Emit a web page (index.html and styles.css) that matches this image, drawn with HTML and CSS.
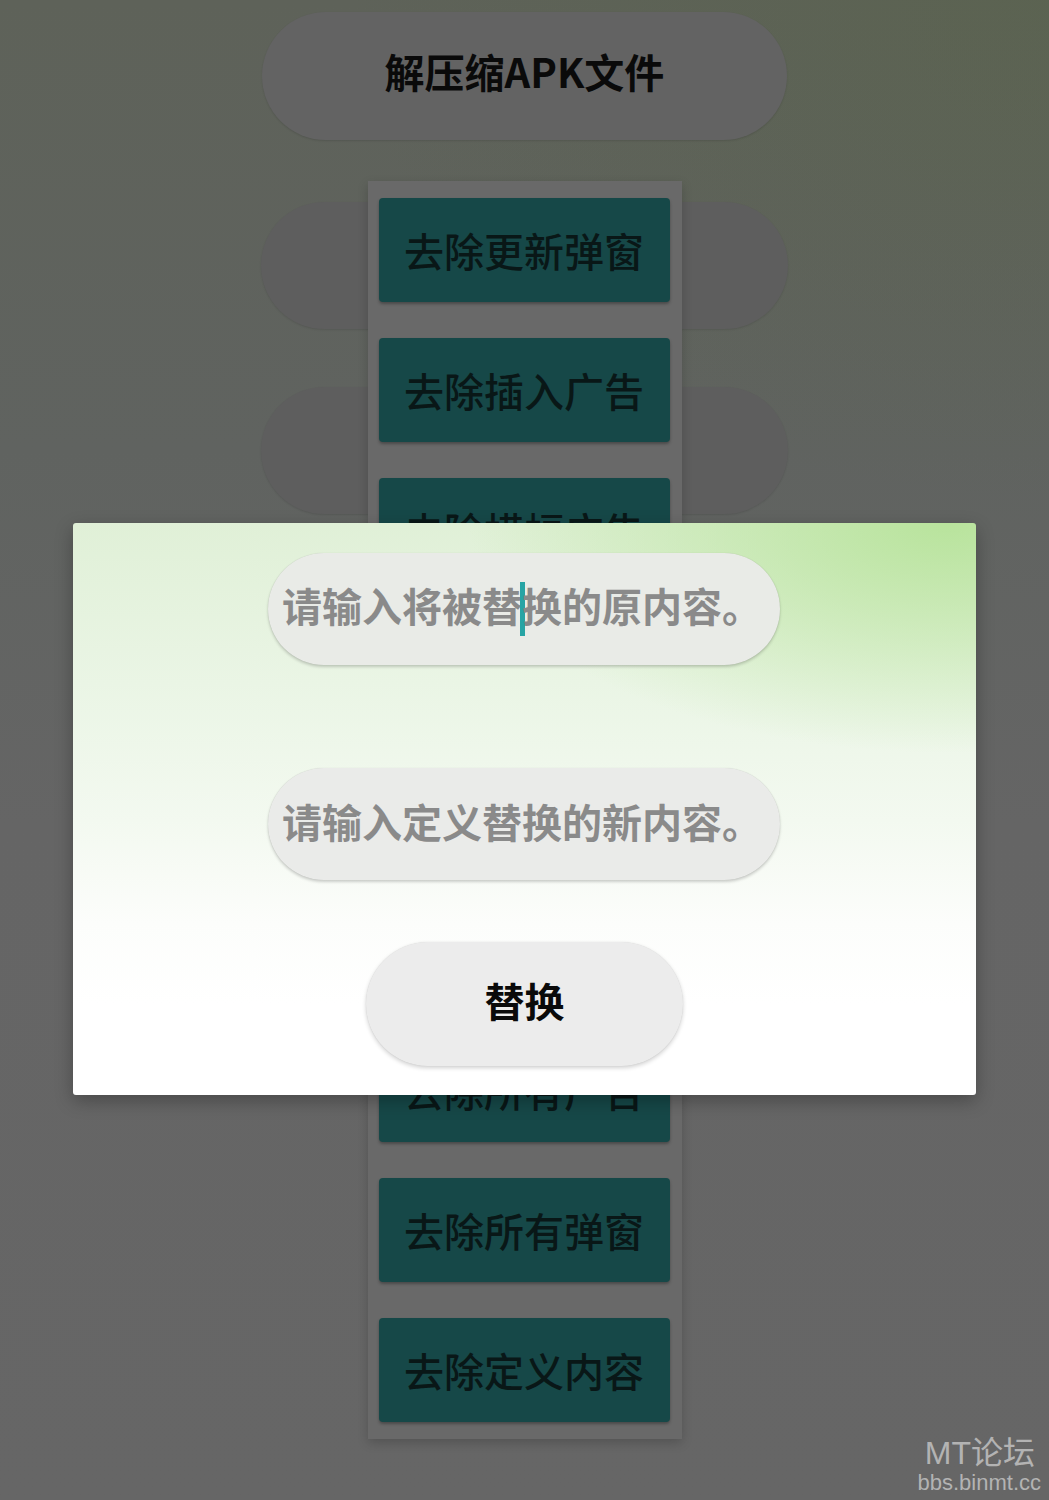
FILE: index.html
```html
<!DOCTYPE html>
<html lang="zh-CN">
<head>
<meta charset="utf-8">
<title>解压缩APK文件</title>
<link rel="stylesheet" href="styles.css">
</head>
<body>
<div class="screen">
  <div class="app">
    <div class="head-pill">解压缩APK文件</div>
    <div class="stack">
      <div class="ghosts">
        <div class="ghost-pill"></div>
        <div class="ghost-pill"></div>
      </div>
      <div class="panel">
        <div class="tool-btn">去除更新弹窗</div>
        <div class="tool-btn">去除插入广告</div>
        <div class="tool-btn">去除横幅广告</div>
        <div class="tool-btn covered">去除启动广告</div>
        <div class="tool-btn covered">去除悬浮广告</div>
        <div class="tool-btn covered">去除视频广告</div>
        <div class="tool-btn">去除所有广告</div>
        <div class="tool-btn">去除所有弹窗</div>
        <div class="tool-btn">去除定义内容</div>
      </div>
    </div>
  </div>

  <div class="dialog">
    <div class="field field-first"><span class="ph">请输入将被替<span class="caret"></span>换的原内容。</span></div>
    <div class="field field-second"><span class="ph">请输入定义替换的新内容。</span></div>
    <div class="replace-btn">替换</div>
  </div>

  <div class="watermark">
    <div class="wm-title">MT论坛</div>
    <div class="wm-url">bbs.binmt.cc</div>
  </div>
</div>
</body>
</html>
```

FILE: styles.css
```css
* { box-sizing: border-box; }
html, body { margin: 0; padding: 0; }
body {
  font-family: "Noto Sans CJK SC", "Noto Sans", sans-serif;
  background: #666666;
}
.screen {
  width: 1049px;
  height: 1500px;
  position: relative;
  overflow: hidden;
  background:
    radial-gradient(ellipse 700px 500px at 100% 0%, rgba(88, 100, 72, 0.45), rgba(88, 100, 72, 0) 100%),
    linear-gradient(180deg, #5e6259 0%, #606360 30%, #656565 55%, #666666 100%);
}
.app {
  display: flex;
  flex-direction: column;
  align-items: center;
  padding-top: 12px;
}
.head-pill {
  width: 525px;
  height: 128px;
  border-radius: 64px;
  background: #636363;
  box-shadow: 0 1px 2px rgba(0, 0, 0, 0.12);
  display: flex;
  align-items: center;
  justify-content: center;
  padding-bottom: 10px;
  font-size: 40px;
  font-weight: 700;
  color: #0a0a0a;
}
.stack {
  margin-top: 41px;
  display: grid;
  justify-items: center;
}
.ghosts {
  grid-area: 1 / 1;
  padding-top: 21px;
  display: flex;
  flex-direction: column;
  gap: 58px;
}
.ghost-pill {
  width: 527px;
  height: 127px;
  border-radius: 64px;
  background: #5e5e5e;
  box-shadow: 0 1px 2px rgba(0, 0, 0, 0.1);
}
.panel {
  grid-area: 1 / 1;
  position: relative;
  z-index: 1;
  width: 314px;
  background: #696969;
  padding: 17px 12px 17px 11px;
  display: flex;
  flex-direction: column;
  gap: 36px;
  box-shadow: 0 4px 10px rgba(0, 0, 0, 0.18);
}
.tool-btn {
  height: 104px;
  border-radius: 4px;
  background: #164848;
  box-shadow: 0 2px 3px rgba(0, 0, 0, 0.3);
  display: flex;
  align-items: center;
  justify-content: center;
  font-size: 40px;
  font-weight: 500;
  color: #091717;
}
.tool-btn.covered { visibility: hidden; }
.dialog {
  position: absolute;
  left: 73px;
  top: 523px;
  width: 903px;
  height: 572px;
  z-index: 5;
  border-radius: 3px;
  background:
    radial-gradient(ellipse 480px 230px at 97% 0%, rgba(180, 226, 150, 0.9), rgba(180, 226, 150, 0) 100%),
    linear-gradient(180deg, #e0f0d7 0%, #eaf5e5 28%, #f3f9f0 52%, #fcfdfb 70%, #ffffff 84%);
  box-shadow: 0 6px 18px rgba(0, 0, 0, 0.28);
  display: flex;
  flex-direction: column;
  align-items: center;
  padding-top: 30px;
}
.field {
  width: 512px;
  height: 112px;
  border-radius: 56px;
  background: #e9ebe7;
  box-shadow: 0 2px 3px rgba(0, 0, 0, 0.18), 0 0 1px rgba(0, 0, 0, 0.15);
  display: flex;
  align-items: center;
  padding-left: 14px;
  padding-bottom: 6px;
  margin-right: 1px;
}
.field-second {
  margin-top: 103px;
  background: #eaebe9;
}
.ph {
  font-size: 40px;
  font-weight: 700;
  color: #8a8a8a;
  white-space: nowrap;
}
.caret {
  display: inline-block;
  width: 5px;
  height: 54px;
  background: #27a4a4;
  vertical-align: middle;
  margin: -6px -3px 0 -2px;
}
.replace-btn {
  margin-top: 62px;
  width: 317px;
  height: 124px;
  border-radius: 62px;
  background: #ececec;
  box-shadow: 0 2px 4px rgba(0, 0, 0, 0.18), 0 0 1px rgba(0, 0, 0, 0.12);
  display: flex;
  align-items: center;
  justify-content: center;
  padding-bottom: 8px;
  font-size: 40px;
  font-weight: 700;
  color: #0a0a0a;
}
.watermark {
  position: absolute;
  right: 8px;
  bottom: 6px;
  z-index: 6;
  display: flex;
  flex-direction: column;
  align-items: flex-end;
  color: #b3b3b3;
  font-family: "Liberation Sans", "Noto Sans CJK SC", sans-serif;
  line-height: 1;
}
.wm-title {
  font-size: 32px;
  margin-right: 6px;
}
.wm-url {
  font-size: 22px;
  margin-top: 3px;
}
```
